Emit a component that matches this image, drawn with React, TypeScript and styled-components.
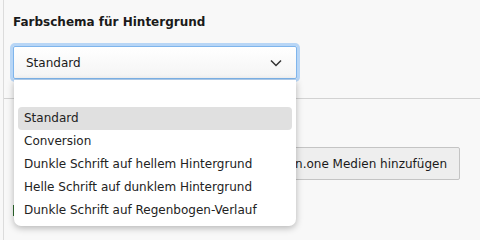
import styled, { createGlobalStyle } from "styled-components";

const GlobalStyle = createGlobalStyle`
  html, body {
    margin: 0;
    padding: 0;
    background: #f8f8f8;
  }
  body {
    font-family: Verdana, "DejaVu Sans", sans-serif;
    color: #1a1a1a;
  }
`;

const Page = styled.div`
  position: relative;
  width: 477px;
  height: 240px;
  overflow: hidden;
  margin-left: 3px;
  border-left: 1px solid #dcdcdc;
  box-sizing: border-box;
`;

const FieldSection = styled.div`
  padding: 14px 0 0 9px;
  height: 99px;
  box-sizing: border-box;
  border-bottom: 1px solid #d2d2d2;
`;

const Label = styled.div`
  font-size: 12px;
  font-weight: bold;
  line-height: 16px;
  margin-bottom: 16px;
`;

const SelectWrap = styled.div`
  position: relative;
  width: 284px;
`;

const SelectBox = styled.div`
  height: 33px;
  box-sizing: border-box;
  border: 1px solid #7fb5ec;
  border-radius: 2px;
  box-shadow: 0 0 0 3px #b8d6f6;
  background: linear-gradient(#ffffff, #f4f4f4);
  display: flex;
  align-items: center;
  justify-content: space-between;
  padding: 0 14px 0 12px;
  font-size: 12px;
`;

const Chevron = styled.svg`
  width: 12px;
  height: 8px;
  color: #333;
`;

const Dropdown = styled.ul`
  position: absolute;
  top: 34px;
  left: 1px;
  width: 282px;
  margin: 0;
  padding: 4px;
  box-sizing: border-box;
  list-style: none;
  background: #fff;
  border-radius: 0 0 7px 7px;
  box-shadow: 0 2px 7px rgba(0, 0, 0, 0.28);
  z-index: 2;
`;

const Option = styled.li<{ $active?: boolean }>`
  height: 23px;
  line-height: 23px;
  padding-left: 6px;
  font-size: 12px;
  color: #222;
  border-radius: 4px;
  background: ${(p) => (p.$active ? "#e0e0e0" : "transparent")};
  white-space: nowrap;
`;

const ActionRow = styled.div`
  display: flex;
  justify-content: flex-end;
  align-items: flex-start;
  padding: 48px 20px 0 9px;
`;

const Marker = styled.div`
  width: 1px;
  height: 11px;
  background: #2d6a2d;
  margin-right: auto;
  margin-top: 58px;
`;

const Button = styled.button`
  font-family: inherit;
  font-size: 12px;
  color: #1a1a1a;
  background: #eeeeee;
  border: 1px solid #c4c4c4;
  border-radius: 2px;
  height: 33px;
  padding: 0 12px;
  white-space: nowrap;
`;

const options = [
  "",
  "Standard",
  "Conversion",
  "Dunkle Schrift auf hellem Hintergrund",
  "Helle Schrift auf dunklem Hintergrund",
  "Dunkle Schrift auf Regenbogen-Verlauf",
];

export default function App() {
  return (
    <>
      <GlobalStyle />
      <Page>
        <FieldSection>
          <Label>Farbschema für Hintergrund</Label>
          <SelectWrap>
            <SelectBox>
              <span>Standard</span>
              <Chevron viewBox="0 0 12 8" fill="none">
                <path d="M1 1.5 L6 6.5 L11 1.5" stroke="currentColor" strokeWidth="1.5" />
              </Chevron>
            </SelectBox>
            <Dropdown>
              {options.map((o, i) => (
                <Option key={i} $active={o === "Standard"}>
                  {o || "\u00a0"}
                </Option>
              ))}
            </Dropdown>
          </SelectWrap>
        </FieldSection>
        <ActionRow>
          <Marker />
          <Button>Bildin.one Medien hinzufügen</Button>
        </ActionRow>
      </Page>
    </>
  );
}
